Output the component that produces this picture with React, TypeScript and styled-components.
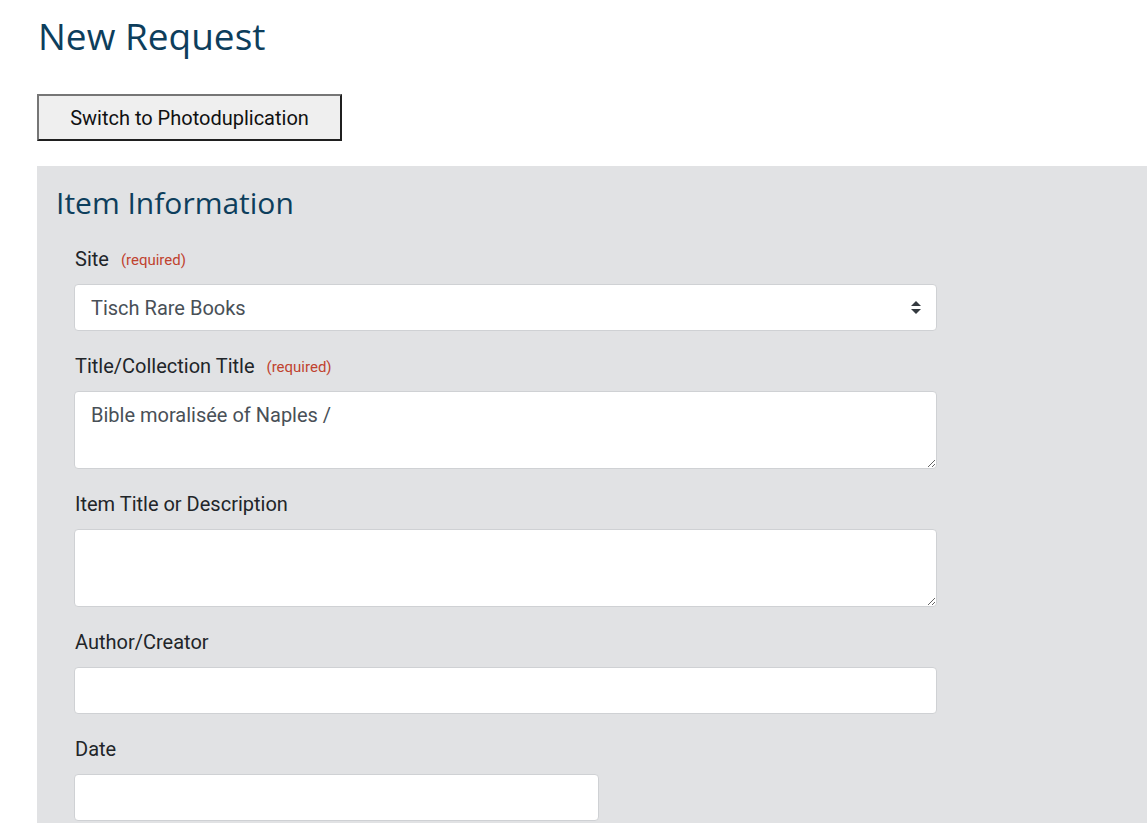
import styled, { createGlobalStyle } from 'styled-components'

const GlobalStyle = createGlobalStyle`
	html, body {
		margin: 0;
		padding: 0;
		background: #fff;
		font-family: Roboto, 'Liberation Sans', Arial, sans-serif;
		color: #212529;
	}
	* {
		box-sizing: border-box;
	}
`

const Page = styled.main`
	padding: 12px 0 0 37px;
	overflow: hidden;
`

const PageTitle = styled.h1`
	margin: 0 0 34px 1px;
	font-family: 'Open Sans', 'DejaVu Sans', sans-serif;
	font-weight: 400;
	font-size: 37px;
	line-height: 48px;
	color: #0d3e5c;
`

const SwitchButton = styled.button`
	display: block;
	width: 305px;
	height: 47px;
	padding: 0;
	margin: 0 0 25px;
	background: #efefef;
	border: 2px solid;
	border-color: #767676 #1f1f1f #1f1f1f #767676;
	font-family: Roboto, 'Liberation Sans', sans-serif;
	font-size: 20px;
	color: #111;
	cursor: pointer;
`

const Panel = styled.section`
	background: #e1e2e4;
	padding: 17px 0 40px 19px;
	min-height: 700px;
`

const PanelTitle = styled.h2`
	margin: 0 0 21px;
	font-family: 'Open Sans', 'DejaVu Sans', sans-serif;
	font-weight: 400;
	font-size: 30px;
	line-height: 40px;
	color: #0d3e5c;
`

const Fields = styled.div`
	display: flex;
	flex-direction: column;
	gap: 20px;
	padding-left: 18px;
`

const Field = styled.div<{ $width?: number }>`
	display: flex;
	flex-direction: column;
	width: ${(p) => p.$width ?? 863}px;
`

const Label = styled.label`
	display: flex;
	align-items: center;
	gap: 12px;
	height: 30px;
	margin: 0 0 10px 1px;
	font-size: 20px;
	line-height: 30px;
	color: #212529;
`

const Required = styled.span`
	font-size: 15px;
	line-height: 30px;
	padding-top: 2px;
	color: #c0432f;
`

const controlBase = `
	width: 100%;
	background: #fff;
	border: 1px solid #cfd1d4;
	border-radius: 4px;
	font-family: Roboto, 'Liberation Sans', sans-serif;
	font-size: 20px;
	color: #495057;
	outline: none;
`

const TextInput = styled.input`
	${controlBase}
	height: 47px;
	padding: 0 16px;
`

const TextArea = styled.textarea`
	${controlBase}
	height: 78px;
	padding: 11px 16px;
	line-height: 24px;
	resize: vertical;
`

const SelectWrap = styled.div`
	position: relative;
`

const Select = styled.select`
	${controlBase}
	height: 47px;
	padding: 0 40px 0 16px;
	appearance: none;
	-webkit-appearance: none;
`

const Arrows = styled.svg`
	position: absolute;
	right: 16px;
	top: 17px;
	pointer-events: none;
`

export default function App() {
	return (
		<>
			<GlobalStyle />
			<Page>
				<PageTitle>New Request</PageTitle>
				<SwitchButton type='button'>Switch to Photoduplication</SwitchButton>
				<Panel>
					<PanelTitle>Item Information</PanelTitle>
					<Fields>
						<Field>
							<Label>
								Site <Required>(required)</Required>
							</Label>
							<SelectWrap>
								<Select defaultValue='tisch'>
									<option value='tisch'>Tisch Rare Books</option>
								</Select>
								<Arrows width='10' height='13' viewBox='0 0 10 13'>
									<path d='M5 0 L10 5 H0 Z' fill='#343a40' />
									<path d='M0 8 H10 L5 13 Z' fill='#343a40' />
								</Arrows>
							</SelectWrap>
						</Field>
						<Field>
							<Label>
								Title/Collection Title <Required>(required)</Required>
							</Label>
							<TextArea defaultValue='Bible moralisée of Naples /' />
						</Field>
						<Field>
							<Label>Item Title or Description</Label>
							<TextArea />
						</Field>
						<Field>
							<Label>Author/Creator</Label>
							<TextInput type='text' />
						</Field>
						<Field $width={525}>
							<Label>Date</Label>
							<TextInput type='text' />
						</Field>
					</Fields>
				</Panel>
			</Page>
		</>
	)
}
